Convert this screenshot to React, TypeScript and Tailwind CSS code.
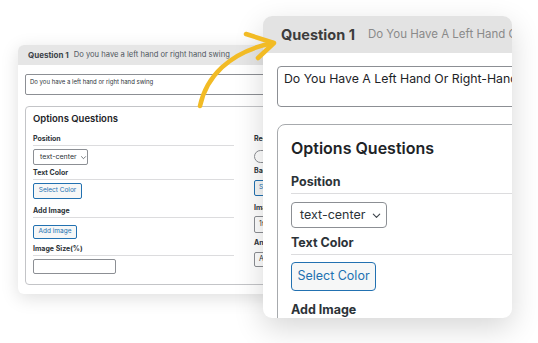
import React from "react";

function Chevron({ size, stroke = "#3c434a" }: { size: number; stroke?: string }) {
  return (
    <svg width={size} height={size} viewBox="0 0 12 12" fill="none">
      <path d="M2.5 4.5 L6 8 L9.5 4.5" stroke={stroke} strokeWidth="1.2" strokeLinecap="round" strokeLinejoin="round" />
    </svg>
  );
}

function BackCard() {
  return (
    <div className="absolute left-[18px] top-[45px] w-[300px] h-[249px] rounded-[6px] bg-white overflow-hidden shadow-[0_4px_18px_rgba(0,0,0,0.13)]">
      <div className="h-[20px] bg-[#e6e6e6] flex items-center pl-[10px] gap-[5px] whitespace-nowrap">
        <span className="font-bold text-[8px] text-[#3c434a]">Question 1</span>
        <span className="text-[7.6px] text-[#50575e]">Do you have a left hand or right hand swing</span>
      </div>
      <div className="px-[7px] pt-[9px]">
        <div className="h-[21px] border border-[#8c8f94] rounded-[2px] pl-[4px] pt-[2px] text-[6px] leading-[9px] text-[#2c3338] whitespace-nowrap">
          Do you have a left hand or right hand swing
        </div>
        <div className="mt-[11px] h-[179px] border border-[#c3c4c7] rounded-[4px] pl-[7px] pt-[6px] whitespace-nowrap">
          <div className="text-[9.5px] leading-[12px] font-semibold text-[#1d2327]">Options Questions</div>
          <div className="flex gap-[20px] mt-[9px]">
            <div className="w-[201px] shrink-0">
              <div className="text-[7px] leading-[10px] font-bold text-[#2c3338] pb-[1px] border-b border-[#dcdcde]">Position</div>
              <div className="mt-[3px] w-[55px] h-[16px] border border-[#8c8f94] rounded-[2px] flex items-center pl-[6px] gap-[3px] text-[7px] text-[#2c3338]">
                text-center <Chevron size={7} />
              </div>
              <div className="mt-[3px] text-[7px] leading-[10px] font-bold text-[#2c3338] pb-[1px] border-b border-[#dcdcde]">Text Color</div>
              <div className="mt-[3px] w-[49px] h-[16px] border border-[#2271b1] rounded-[2px] bg-[#f6f7f7] flex items-center justify-center text-[6.5px] text-[#2271b1]">Select Color</div>
              <div className="mt-[7px] text-[7px] leading-[10px] font-bold text-[#2c3338] pb-[1px] border-b border-[#dcdcde]">Add Image</div>
              <div className="mt-[7px] w-[44px] h-[14px] border border-[#2271b1] rounded-[2px] bg-[#f6f7f7] flex items-center justify-center text-[6.5px] text-[#2271b1]">Add image</div>
              <div className="mt-[5px] text-[7px] leading-[10px] font-bold text-[#2c3338] pb-[1px] border-b border-[#dcdcde]">Image Size(%)</div>
              <div className="mt-[3px] w-[83px] h-[15px] border border-[#8c8f94] rounded-[2px]" />
            </div>
            <div className="w-[120px] shrink-0">
              <div className="text-[7px] leading-[10px] font-bold text-[#2c3338] pb-[1px]">Required</div>
              <div className="mt-[5px] w-[26px] h-[13px] border border-[#8c8f94] rounded-full" />
              <div className="mt-[3px] text-[7px] leading-[10px] font-bold text-[#2c3338] pb-[1px]">Background Color</div>
              <div className="mt-[3px] w-[49px] h-[16px] border border-[#2271b1] rounded-[2px] bg-[#f6f7f7] flex items-center pl-[4px] text-[6.5px] text-[#2271b1]">Select Color</div>
              <div className="mt-[7px] text-[7px] leading-[10px] font-bold text-[#2c3338]">Image Position</div>
              <div className="mt-[3px] w-[60px] h-[17px] border border-[#8c8f94] rounded-[2px] flex items-center pl-[4px] text-[7px] text-[#2c3338]">1to1</div>
              <div className="mt-[5px] text-[7px] leading-[10px] font-bold text-[#2c3338]">Answer</div>
              <div className="mt-[4px] w-[60px] h-[15px] border border-[#8c8f94] rounded-[2px] flex items-center pl-[4px] text-[7px] text-[#2c3338]">A</div>
            </div>
          </div>
        </div>
      </div>
    </div>
  );
}

function FrontCard() {
  return (
    <div className="absolute left-[263px] top-[16px] w-[249px] h-[302px] rounded-[9px] bg-white overflow-hidden shadow-[0_10px_30px_rgba(0,0,0,0.16)]">
      <div className="h-[37px] bg-[#e3e3e3] flex items-center pl-[18px] gap-[13px] whitespace-nowrap">
        <span className="font-bold text-[14.5px] text-[#3c3c3c]">Question 1</span>
        <span className="text-[11.5px] text-[#8a8a8a]">Do You Have A Left Hand Or Right-Hand Swing</span>
      </div>
      <div className="pl-[14px] pt-[13px] w-[400px]">
        <div className="h-[41px] border border-[#8c8f94] rounded-[4px] pl-[6px] pt-[3px] text-[12.3px] leading-[18px] text-[#1d2327] whitespace-nowrap">
          Do You Have A Left Hand Or Right-Hand Swing
        </div>
        <div className="mt-[17px] h-[300px] border border-[#a7aaad] rounded-[8px] pl-[13px] pt-[13px] whitespace-nowrap">
          <div className="text-[16px] leading-[20px] font-semibold text-[#1d2327]">Options Questions</div>
          <div className="mt-[16px] text-[12.5px] leading-[16px] font-bold text-[#2c3338] pb-[3px] border-b border-[#dcdcde]">Position</div>
          <div className="mt-[8px] w-[96px] h-[26px] border border-[#8c8f94] rounded-[4px] flex items-center pl-[8px] gap-[6px] text-[12.5px] text-[#2c3338]">
            text-center <Chevron size={11} />
          </div>
          <div className="mt-[7px] text-[12.5px] leading-[16px] font-bold text-[#2c3338] pb-[3px] border-b border-[#dcdcde]">Text Color</div>
          <div className="mt-[7px] w-[85px] h-[29px] border border-[#2271b1] rounded-[4px] bg-[#f6f7f7] flex items-center justify-center text-[12.5px] text-[#2271b1]">Select Color</div>
          <div className="mt-[11px] text-[12.5px] leading-[16px] font-bold text-[#2c3338] pb-[3px]">Add Image</div>
        </div>
      </div>
    </div>
  );
}

export default function App() {
  return (
    <div className="relative w-[538px] h-[343px] bg-white overflow-hidden font-['Inter',sans-serif]">
      <BackCard />
      <FrontCard />
      <svg className="absolute inset-0 pointer-events-none" width="538" height="343" viewBox="0 0 538 343" fill="none">
        <path d="M200 106 C 206 78, 228 52, 273 43" stroke="#f2bb25" strokeWidth="4.5" strokeLinecap="round" />
        <path d="M246 34 L274 43 L258 58" stroke="#f2bb25" strokeWidth="4.5" strokeLinecap="round" strokeLinejoin="round" />
      </svg>
    </div>
  );
}
